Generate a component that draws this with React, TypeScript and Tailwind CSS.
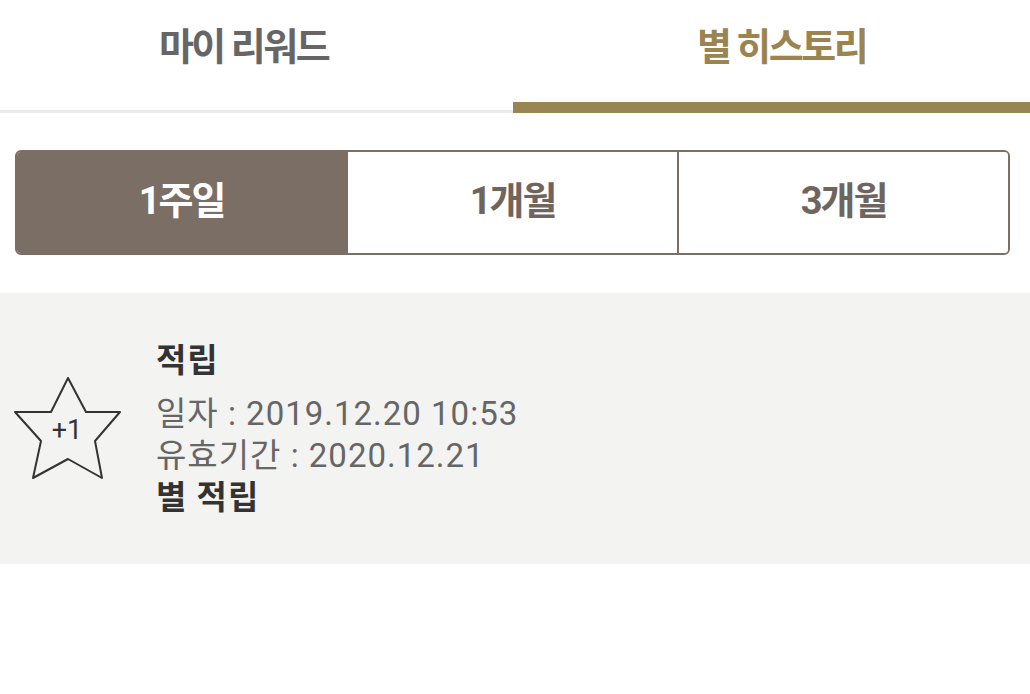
import { useState } from "react";

const FONT = "font-['Roboto','Noto_Sans_CJK_KR',sans-serif]";

const PERIODS = ["1주일", "1개월", "3개월"];

function StarBadge() {
  return (
    <div className="relative h-[108px] w-[110px] shrink-0">
      <svg viewBox="0 0 110 108" className="h-full w-full" fill="none">
        <path
          d="M55 3 L73 37 L107 37 L82 66 L89 103 L55 84 L20 103 L28 66 L2 37 L38 37 Z"
          stroke="#333"
          strokeWidth="2"
          strokeLinejoin="round"
        />
      </svg>
      <span className="absolute inset-0 flex items-center justify-center pt-[4px] pr-[2px] text-[27px] text-[#333]">
        +1
      </span>
    </div>
  );
}

export default function App() {
  const [tab, setTab] = useState(1);
  const [period, setPeriod] = useState(0);

  return (
    <div className={`h-[694px] w-[1030px] bg-white ${FONT}`}>
      {/* 상단 탭 */}
      <div className="flex h-[113px]">
        {["마이 리워드", "별 히스토리"].map((label, i) => {
          const active = tab === i;
          return (
            <button
              key={label}
              type="button"
              onClick={() => setTab(i)}
              className={`flex flex-col ${i === 0 ? "w-[513px]" : "flex-1"}`}
            >
              <span
                className={`flex flex-1 items-start justify-center pt-[19px] text-[38px] font-bold tracking-[-2.5px] ${
                  i === 0 ? "pr-[26px]" : "pl-[20px]"
                } ${active ? "text-[#9a8551]" : "text-[#666]"}`}
              >
                {label}
              </span>
              <span
                className={`block w-full ${
                  active ? "h-[11px] bg-[#9a8451]" : "h-[3px] bg-[#ebebeb]"
                }`}
              />
            </button>
          );
        })}
      </div>

      {/* 기간 선택 */}
      <div className="pl-[15px] pr-[20px] pt-[37px]">
        <div className="flex h-[105px] overflow-hidden rounded-[6px] border-2 border-[#7a6e65]">
          {PERIODS.map((p, i) => {
            const active = period === i;
            return (
              <button
                key={p}
                type="button"
                onClick={() => setPeriod(i)}
                className={`flex flex-1 items-center justify-center pb-[2px] text-[38px] font-bold tracking-[-2px] ${
                  i > 0 ? "border-l-2 border-[#7a6e65]" : ""
                } ${active ? "bg-[#7a6e65] text-white" : "bg-white text-[#6f655e]"}`}
              >
                {p}
              </button>
            );
          })}
        </div>
      </div>

      {/* 히스토리 목록 */}
      <div className="mt-[38px] flex h-[271px] items-center gap-[33px] bg-[#f3f3f1] pl-[13px]">
        <StarBadge />
        <div className="flex flex-col pt-[2px] text-[33px] leading-[42px] tracking-[1px]">
          <div className="mb-[11px] font-bold text-[#333]">적립</div>
          <div className="text-[#666]">일자 : 2019.12.20 10:53</div>
          <div className="text-[#666]">유효기간 : 2020.12.21</div>
          <div className="font-bold text-[#333]">별 적립</div>
        </div>
      </div>
    </div>
  );
}
